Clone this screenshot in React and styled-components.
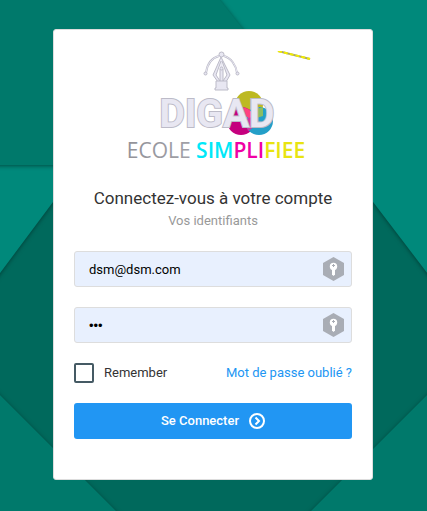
import React from "react";
import styled, { createGlobalStyle } from "styled-components";

const GlobalStyle = createGlobalStyle`
  *, *::before, *::after { box-sizing: border-box; }
  body {
    margin: 0;
    background: #00695c;
    color: #333;
    font: 13px/20px Roboto, "Liberation Sans", sans-serif;
  }
`;

const Page = styled.main`
  position: relative;
  display: flex;
  flex-direction: column;
  align-items: center;
  justify-content: center;
  min-height: 100vh;
  padding: 20px 21px 22px 20px;
  overflow: hidden;
`;

const Backdrop = styled.svg`
  position: absolute;
  inset: 0;
  z-index: -1;
  width: 100%;
  height: 100%;
`;

const Card = styled.form`
  width: 100%;
  max-width: 320px;
  padding: 21px 20px 40px;
  background: #fff;
  border: 1px solid #ddd;
  border-radius: 3px;
`;

const Header = styled.header`
  display: flex;
  flex-direction: column;
  align-items: center;
  margin-bottom: 19px;
  text-align: center;
`;

const Logo = styled.svg`
  display: block;
  width: 200px;
  height: 120px;
  margin-bottom: 15px;
`;

const Title = styled.h1`
  margin: 0;
  font-size: 17px;
  font-weight: 400;
  line-height: 24px;
`;

const Subtitle = styled.p`
  margin: 0;
  color: #999;
  line-height: 22px;
`;

const Field = styled.div`
  position: relative;
  margin-bottom: 20px;
`;

const TextInput = styled.input`
  display: block;
  width: 100%;
  height: 36px;
  padding: 7px 36px 7px 14px;
  background: #e8f0fe;
  border: 1px solid #ddd;
  border-radius: 3px;
  color: #000;
  font: 13px/20px Roboto, sans-serif;
  outline: none;

  &[type="password"] {
    font-family: "Liberation Sans", sans-serif;
  }
`;

const KeyBadge = styled.svg`
  position: absolute;
  top: 6px;
  right: 8px;
  width: 21px;
  height: 24px;
`;

const Options = styled.div`
  display: flex;
  align-items: center;
  justify-content: space-between;
  margin-bottom: 20px;
`;

const Remember = styled.label`
  display: flex;
  align-items: center;
  gap: 10px;
`;

const Checkbox = styled.input`
  appearance: none;
  width: 20px;
  height: 20px;
  margin: 0;
  border: 2px solid #455a64;
  border-radius: 2px;

  &:checked {
    background: #455a64;
    box-shadow: inset 0 0 0 3px #fff;
  }
`;

const ForgotLink = styled.a`
  color: #2196f3;
  text-decoration: none;
`;

const SubmitButton = styled.button`
  display: flex;
  align-items: center;
  justify-content: center;
  gap: 10px;
  width: 100%;
  height: 36px;
  padding: 0;
  background: #2196f3;
  border: 0;
  border-radius: 3px;
  color: #fff;
  font: 500 13px/20px Roboto, sans-serif;
  cursor: pointer;
`;

const BrandName = styled.text`
  font: 700 39px Roboto, sans-serif;
  text-anchor: middle;
  paint-order: stroke;
`;

const Tagline = styled.text`
  font: 400 21px "Open Sans", sans-serif;
  text-anchor: middle;
`;

const Accent = styled.tspan`
  font-weight: 600;
`;

function Wallpaper() {
  return (
    <Backdrop viewBox="0 0 427 511" preserveAspectRatio="xMidYMid slice" aria-hidden="true">
      <defs>
        <filter id="edge" x="-20%" y="-20%" width="140%" height="140%" colorInterpolationFilters="sRGB">
          <feDropShadow dx="0" dy="1" stdDeviation="2" floodColor="#00251f" floodOpacity="0.6" />
        </filter>
      </defs>
      <rect x="-300" y="-300" width="1100" height="1200" fill="#00695c" />
      <path d="M-400 165H100V139L-400 809Z" fill="#00897b" filter="url(#edge)" />
      <path d="M-300 -300H-18L351 173L600 500V-300Z" fill="#00897b" filter="url(#edge)" />
      <path d="M-400 -300H-18L220 0L351 165H-400Z" fill="#00796b" filter="url(#edge)" />
      <path d="M-300 95L416 811H-300Z" fill="#00796b" filter="url(#edge)" />
      <path d="M727 95L11 811H727Z" fill="#00796b" filter="url(#edge)" />
    </Backdrop>
  );
}

function BrandLogo() {
  return (
    <Logo viewBox="-1 0 200 120" role="img" aria-label="Digad École simplifiée">
      <defs>
        <linearGradient id="grey" x1="0" x2="1">
          <stop offset="0" stopColor="#929299" />
          <stop offset="1" stopColor="#bbbbc1" />
        </linearGradient>
      </defs>
      <path d="M164 0L196 8" fill="none" stroke="#aaa66b" strokeWidth="2" />
      <path d="M164 0L196 8" fill="none" stroke="#f2ed00" strokeWidth="2" strokeDasharray="4 2" />
      <g fill="none" stroke="#bcbbc8" strokeWidth="1">
        <path d="M105 5C97 7 93 14 92 22M110 5C117 7 122 14 123 22" strokeWidth="2" />
        <path d="M105 5C97 7 93 14 92 22M110 5C117 7 122 14 123 22" stroke="#e8e7f2" />
        <circle cx="107.500" cy="3.500" r="2.500" fill="#e8e7f2" />
        <circle cx="91.500" cy="22.500" r="1.500" fill="#e8e7f2" />
        <circle cx="123.500" cy="22.500" r="1.500" fill="#e8e7f2" />
        <path d="M107 6L99 24L104 31H112L116 24Z" fill="#e8e7f2" />
        <path d="M107 10L102 24L106 30V18M108 10L113 24L109 30V18" fill="#fff" />
        <circle cx="107.500" cy="17.500" r="1.500" fill="#e8e7f2" />
        <path d="M102 30H113V37H114V39H101V37H102Z" fill="#e8e7f2" />
      </g>
      <circle cx="135" cy="54" r="14" fill="#bdb922" />
      <circle cx="127" cy="70" r="14" fill="#c5007e" />
      <circle cx="145" cy="70" r="14" fill="#249fc8" />
      <path d="M127 56A14 14 0 0 1 140 65L136 68L124 60Z" fill="#ff4180" />
      <path d="M131 69A14 14 0 0 1 140 66V76L134 80Z" fill="#d733a0" />
      <path d="M139 59L149 56V65L139 68Z" fill="#8cbd63" />
      <BrandName x="103" y="76" fill="#e8e7f2" stroke="#bcbbc8" strokeWidth="2">DIGAD</BrandName>
      <Tagline x="102" y="107">
        <tspan fill="url(#grey)">ECOLE </tspan>
        <Accent fill="#00e8f8">SIM</Accent>
        <Accent fill="#f000a5">PLI</Accent>
        <Accent fill="#e8e410">FIEE</Accent>
      </Tagline>
    </Logo>
  );
}

function KeyIcon() {
  return (
    <KeyBadge viewBox="0 0 21 24" aria-hidden="true">
      <path d="M10.500 0L21 6V18L10.500 24L0 18V6Z" fill="#a9adb5" />
      <circle cx="10.500" cy="9.500" r="3.700" fill="#fff" />
      <path d="M9 11H12V17.500L10.500 19L9 17.500Z" fill="#fff" />
      <path d="M10.500 7V10M9 8.500H12" stroke="#a9adb5" strokeWidth="1" />
    </KeyBadge>
  );
}

export default function App() {
  return (
    <>
      <GlobalStyle />
      <Page>
        <Wallpaper />
        <Card onSubmit={(e) => e.preventDefault()}>
          <Header>
            <BrandLogo />
            <Title>Connectez-vous à votre compte</Title>
            <Subtitle>Vos identifiants</Subtitle>
          </Header>
          <Field>
            <TextInput type="email" aria-label="Email" defaultValue="dsm@dsm.com" />
            <KeyIcon />
          </Field>
          <Field>
            <TextInput type="password" aria-label="Mot de passe" defaultValue="dsm" />
            <KeyIcon />
          </Field>
          <Options>
            <Remember>
              <Checkbox type="checkbox" />
              Remember
            </Remember>
            <ForgotLink href="#oublie">Mot de passe oublié ?</ForgotLink>
          </Options>
          <SubmitButton type="submit">
            Se Connecter
            <svg width="16" height="16" viewBox="0 0 16 16" fill="none" stroke="#fff" strokeWidth="2" aria-hidden="true">
              <circle cx="8" cy="8" r="7" />
              <path d="M6.500 4.500L10 8L6.500 11.500" />
            </svg>
          </SubmitButton>
        </Card>
      </Page>
    </>
  );
}
